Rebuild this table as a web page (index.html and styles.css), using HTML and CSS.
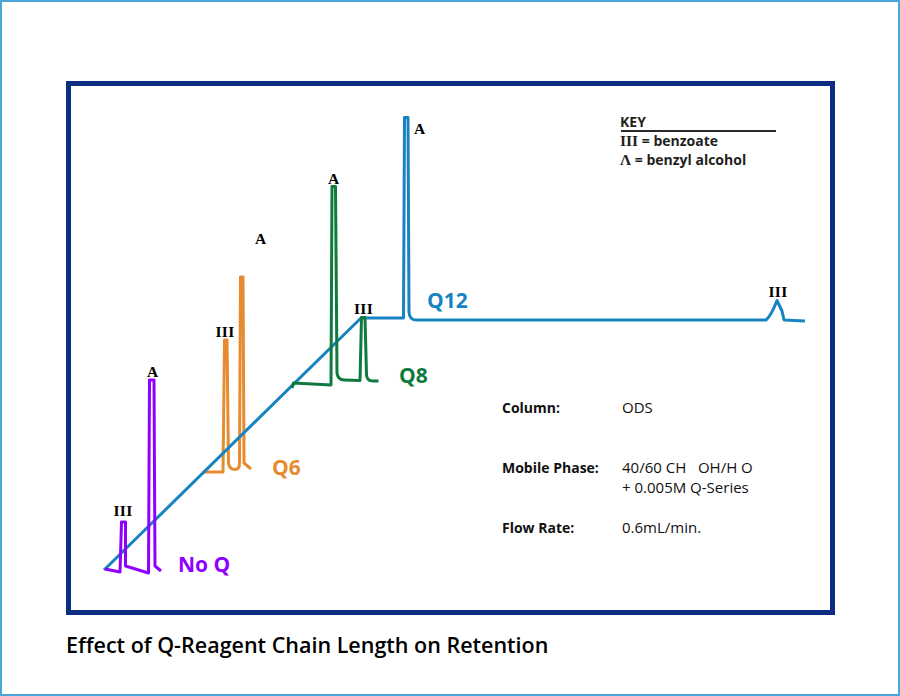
FILE: index.html
```html
<!DOCTYPE html>
<html lang="en">
<head>
<meta charset="utf-8">
<title>Effect of Q-Reagent Chain Length on Retention</title>
<link rel="stylesheet" href="styles.css">
</head>
<body>
<div class="page">
  <div class="frame">
    <svg class="chart" width="759" height="524" viewBox="71 86 759 524" xmlns="http://www.w3.org/2000/svg">
      <!-- Q6 (orange) drawn under the baseline -->
      <path class="trace orange" d="M203,472 L223,472 L224.5,340 L227,340 L228.5,463 Q229.5,469.5 235,469.5 Q239.5,469.5 239.5,463 L240.5,277 L243,277 L244,463 L251,469"/>
      <!-- Q12 (blue) -->
      <path class="trace blue" d="M104,570 L361,318 L403.5,318 L404.5,117.5 L408,117.5 L409,312 Q409.5,320 416,320 L766,320 Q771,316 777,300.5 L782,311 L784,320 L805,321"/>
      <!-- No Q (purple) -->
      <path class="trace purple" d="M105,569 L120,572 L121.5,522 L125.5,522 L125.5,566 L148.5,573 L149.5,380 L154,380 L155,566 L161,571"/>
      <!-- Q8 (green) -->
      <path class="trace green" d="M292,388 L293.5,383 L331,385 L332,186.5 L335.5,186.5 L337,373 Q338,380 344,380 L360,380.5 L361.5,317.5 L365,317.5 L366.5,375 Q367,381 373,381 L378.5,381"/>

      <!-- peak labels -->
      <text class="roman" x="414" y="134">A</text>
      <text class="roman" x="328" y="184">A</text>
      <text class="roman" x="255" y="244">A</text>
      <text class="roman" x="147" y="377">A</text>
      <text class="roman iii" x="354" y="314">III</text>
      <text class="roman iii" x="215.5" y="337">III</text>
      <text class="roman iii" x="113.5" y="516">III</text>
      <text class="roman iii" x="768.5" y="297">III</text>

      <!-- series labels -->
      <text class="series blue-t" x="427" y="308">Q12</text>
      <text class="series green-t" x="399" y="383">Q8</text>
      <text class="series orange-t" x="272" y="475">Q6</text>
      <text class="series purple-t" x="178" y="572">No Q</text>

      <!-- key -->
      <text class="key" x="620" y="127">KEY</text>
      <line class="key-rule" x1="621" y1="131" x2="776" y2="131"/>
      <text class="key" x="620" y="146"><tspan class="key-roman">III</tspan> = benzoate</text>
      <text class="key" x="620" y="165"><tspan class="key-roman">Λ</tspan> = benzyl alcohol</text>

      <!-- conditions -->
      <text class="cond-label" x="502" y="413">Column:</text>
      <text class="cond-val" x="622" y="413">ODS</text>
      <text class="cond-label" x="502" y="473">Mobile Phase:</text>
      <text class="cond-val" x="622" y="473" xml:space="preserve">40/60 CH   OH/H O</text>
      <text class="cond-val" x="622" y="493">+ 0.005M Q-Series</text>
      <text class="cond-label" x="502" y="533">Flow Rate:</text>
      <text class="cond-val" x="622" y="533">0.6mL/min.</text>
    </svg>
  </div>
  <p class="caption">Effect of Q-Reagent Chain Length on Retention</p>
</div>
</body>
</html>
```

FILE: styles.css
```css
html, body {
  margin: 0;
  padding: 0;
  background: #ffffff;
}

.page {
  width: 900px;
  height: 696px;
  box-sizing: border-box;
  border: 2px solid #4ba7d7;
  padding: 79px 0 0 64px;
  background: #ffffff;
  overflow: hidden;
}

.frame {
  width: 769px;
  height: 534px;
  box-sizing: border-box;
  border: 5px solid #0b2d84;
}

.chart {
  display: block;
}

.trace {
  fill: none;
  stroke-width: 3;
  stroke-linejoin: round;
  stroke-linecap: butt;
}

.blue { stroke: #1784c1; }
.green { stroke: #0f7a3d; }
.orange { stroke: #e68b30; }
.purple { stroke: #9000ff; }

.roman {
  font-family: "Liberation Serif", "Times New Roman", serif;
  font-weight: bold;
  font-size: 15.5px;
  fill: #000000;
}

.iii {
  letter-spacing: 0.3px;
}

.series {
  font-family: "Open Sans", "Liberation Sans", sans-serif;
  font-weight: 700;
  font-size: 21px;
}

.blue-t { fill: #1784c1; }
.green-t { fill: #0f7a3d; }
.orange-t { fill: #e68b30; }
.purple-t { fill: #9000ff; }

.key {
  font-family: "Open Sans", "Liberation Sans", sans-serif;
  font-weight: 700;
  font-size: 14px;
  fill: #231f20;
}

.key-roman {
  font-family: "Liberation Serif", "Times New Roman", serif;
  font-size: 15.5px;
}

.key-rule {
  stroke: #2a2a2a;
  stroke-width: 1.8;
}

.cond-label {
  font-family: "Open Sans", "Liberation Sans", sans-serif;
  font-weight: 700;
  font-size: 14px;
  fill: #111111;
}

.cond-val {
  font-family: "Open Sans", "Liberation Sans", sans-serif;
  font-weight: 400;
  font-size: 15px;
  fill: #111111;
  white-space: pre;
}

.caption {
  margin: 16px 0 0 0;
  font-family: "Open Sans", "Liberation Sans", sans-serif;
  font-weight: 600;
  font-size: 21.5px;
  line-height: 28px;
  color: #000000;
  white-space: nowrap;
}
```
